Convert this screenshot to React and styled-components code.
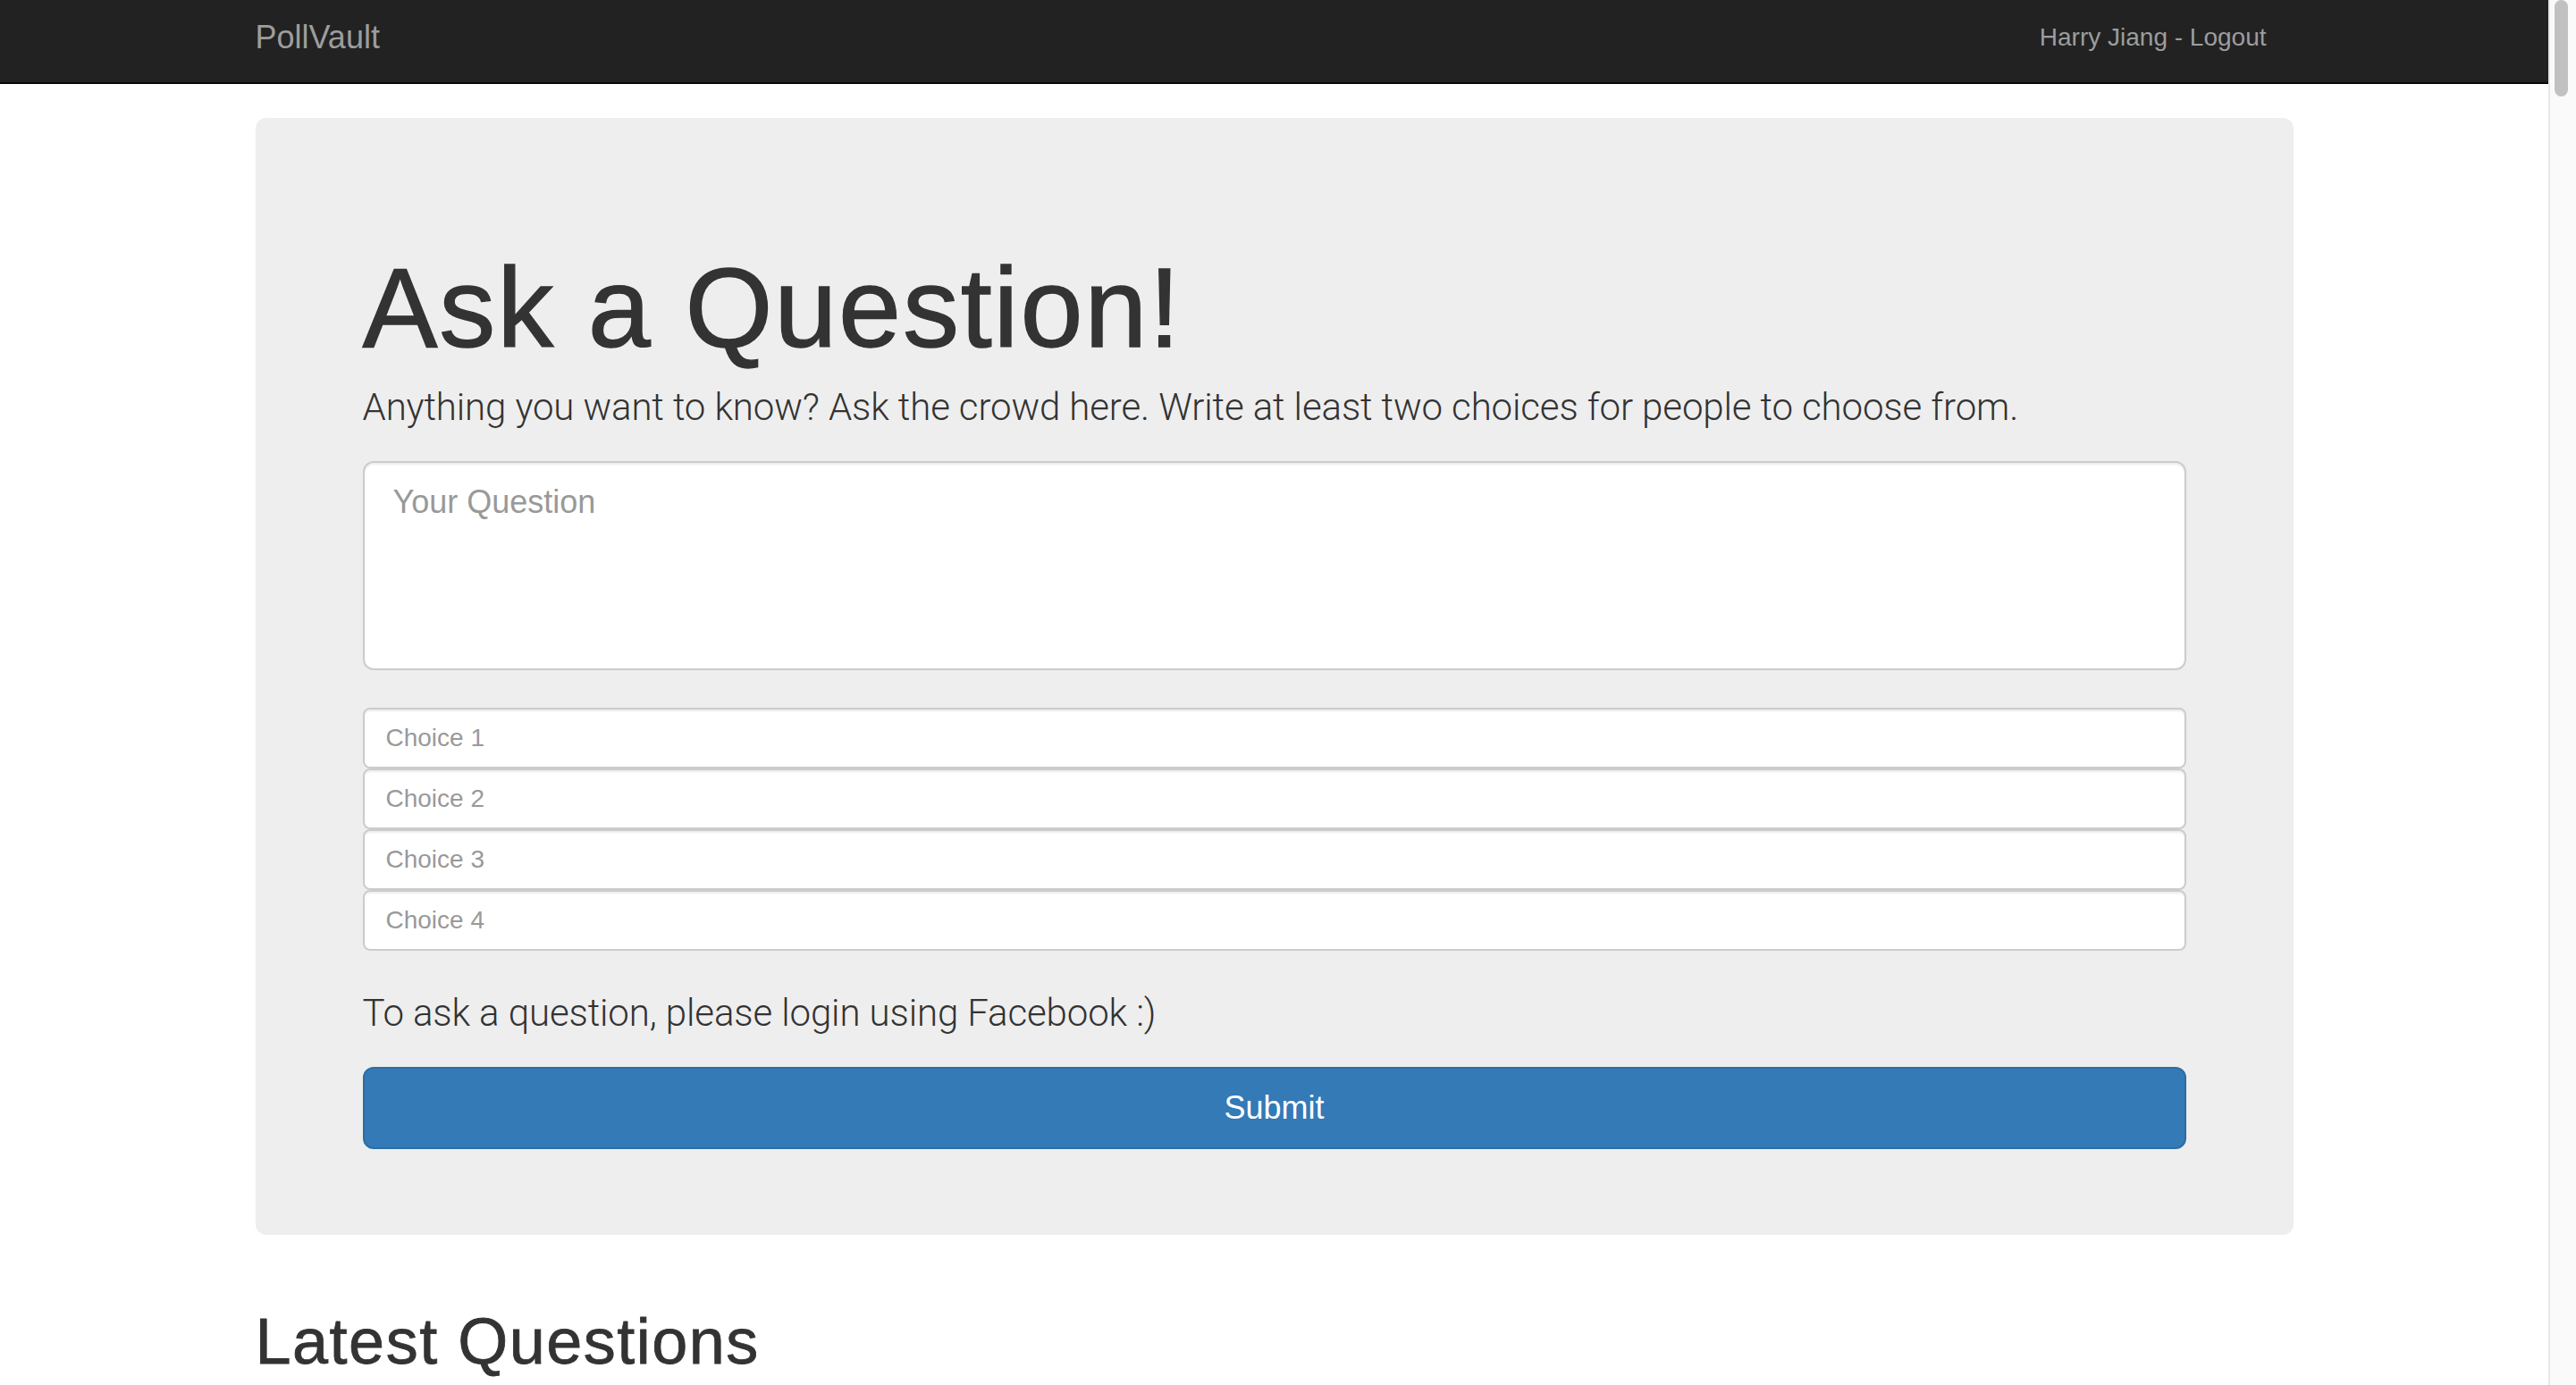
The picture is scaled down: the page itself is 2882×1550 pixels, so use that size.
import React from "react";
import styled, { createGlobalStyle } from "styled-components";

const GlobalStyle = createGlobalStyle`
  html, body {
    margin: 0;
    padding: 0;
  }
  body {
    font-family: "Liberation Sans", Arial, sans-serif;
    color: #333;
    background: #fff;
  }
`;

const Viewport = styled.div`
  display: flex;
  align-items: flex-start;
`;

const Page = styled.div`
  flex: 1;
  min-width: 0;
`;

const ScrollTrack = styled.div`
  flex-shrink: 0;
  width: 31px;
  height: 100vh;
  box-sizing: border-box;
  padding: 0 9px 0 5px;
  background: #fafafa;
  border-left: 2px solid #e8e8e8;
`;

const ScrollThumb = styled.div`
  height: 108px;
  background: #c1c1c1;
  border-radius: 8px;
`;

const Navbar = styled.nav`
  background: #222;
  border-bottom: 2px solid #080808;
`;

const NavInner = styled.div`
  width: 2340px;
  height: 92px;
  margin: 0 auto;
  padding: 0 30px 8px;
  box-sizing: border-box;
  display: flex;
  align-items: center;
  justify-content: space-between;
`;

const Brand = styled.a`
  font-size: 36px;
  line-height: 40px;
  color: #9d9d9d;
  text-decoration: none;
`;

const NavLink = styled.a`
  font-size: 28px;
  line-height: 40px;
  color: #9d9d9d;
  text-decoration: none;
  padding-right: 30px;
`;

const Container = styled.main`
  width: 2340px;
  margin: 0 auto;
  padding: 0 30px;
  box-sizing: border-box;
`;

const Jumbotron = styled.section`
  margin-top: 38px;
  padding: 96px 120px;
  background: #eee;
  border-radius: 12px;
`;

const Title = styled.h1`
  margin: 48px 0 12px;
  font-size: 126px;
  line-height: 138px;
  font-weight: 500;
  letter-spacing: 1.8px;
  -webkit-text-stroke: 1.3px #333;
  color: #333;
`;

const Lead = styled.p`
  margin: ${(p) => (p.$top ? "40px" : "0")} 0 30px;
  font-family: Roboto, "Liberation Sans", sans-serif;
  font-size: 42px;
  line-height: 60px;
  font-weight: 300;
  letter-spacing: -0.12px;
  color: #333;
`;

const QuestionBox = styled.textarea`
  display: block;
  width: 100%;
  height: 234px;
  margin: 0 0 42px;
  padding: 20px 32px;
  box-sizing: border-box;
  border: 2px solid #ccc;
  border-radius: 12px;
  box-shadow: inset 0 2px 2px rgba(0, 0, 0, 0.075);
  background: #fff;
  font-family: "Liberation Sans", Arial, sans-serif;
  font-size: 36px;
  line-height: 48px;
  color: #555;
  resize: none;
  outline: none;

  &::placeholder {
    color: #999;
  }
`;

const Choices = styled.div`
  display: flex;
  flex-direction: column;
`;

const ChoiceInput = styled.input`
  display: block;
  width: 100%;
  height: 68px;
  margin: 0;
  padding: 12px 24px;
  box-sizing: border-box;
  border: 2px solid #ccc;
  border-radius: 8px;
  box-shadow: inset 0 2px 2px rgba(0, 0, 0, 0.075);
  background: #fff;
  font-family: "Liberation Sans", Arial, sans-serif;
  font-size: 28px;
  color: #555;
  outline: none;

  &::placeholder {
    color: #999;
  }
`;

const SubmitButton = styled.button`
  display: block;
  width: 100%;
  height: 92px;
  padding: 20px 32px;
  box-sizing: border-box;
  background: #337ab7;
  border: 2px solid #2e6da4;
  border-radius: 12px;
  color: #fff;
  font-family: "Liberation Sans", Arial, sans-serif;
  font-size: 36px;
  line-height: 48px;
  cursor: pointer;
`;

const SectionTitle = styled.h1`
  margin: 80px 0 20px;
  font-size: 72px;
  line-height: 79px;
  font-weight: 500;
  letter-spacing: 1.5px;
  -webkit-text-stroke: 0.8px #333;
  color: #333;
`;

const choices = ["Choice 1", "Choice 2", "Choice 3", "Choice 4"];

const App = () => {
  return (
    <Viewport>
      <GlobalStyle />
      <Page>
        <Navbar>
          <NavInner>
            <Brand href="#">PollVault</Brand>
            <NavLink href="#">Harry Jiang - Logout</NavLink>
          </NavInner>
        </Navbar>
        <Container>
          <Jumbotron>
            <Title>Ask a Question!</Title>
            <Lead>
              Anything you want to know? Ask the crowd here. Write at least two
              choices for people to choose from.
            </Lead>
            <form onSubmit={(e) => e.preventDefault()}>
              <QuestionBox placeholder="Your Question" />
              <Choices>
                {choices.map((c) => (
                  <ChoiceInput key={c} type="text" placeholder={c} />
                ))}
              </Choices>
              <Lead $top>To ask a question, please login using Facebook :)</Lead>
              <SubmitButton type="submit">Submit</SubmitButton>
            </form>
          </Jumbotron>
          <SectionTitle>Latest Questions</SectionTitle>
        </Container>
      </Page>
      <ScrollTrack>
        <ScrollThumb />
      </ScrollTrack>
    </Viewport>
  );
};

export default App;
